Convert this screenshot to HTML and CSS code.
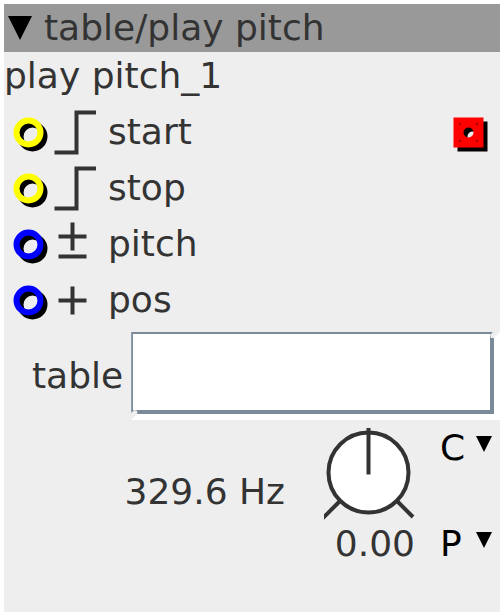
FILE: index.html
```html
<!DOCTYPE html>
<html lang="en">
<head>
    <meta charset="UTF-8">
    <meta name="viewport" content="width=device-width, initial-scale=1.0">
    <title>table/play pitch</title>
    <link rel="stylesheet" href="styles.css">
</head>
<body>
    <main class="patch-object">
        <header class="title-bar">
            <button type="button" class="menu-button" aria-label="Object menu"><span class="arrow arrow-large"></span></button>
            <h1 class="title">table/play pitch</h1>
        </header>
        <div class="instance-name">play pitch_1</div>

        <div class="port-row">
            <svg class="port inlet-yellow" viewBox="0 0 36 36">
                <circle class="port-shadow" cx="20.5" cy="20.5" r="12"/>
                <circle class="port-ring" cx="16.5" cy="16.5" r="12"/>
            </svg>
            <svg class="signal" viewBox="0 0 48 48">
                <path d="M6.5 44.5H28.5V4.5H48"/>
            </svg>
            <span class="port-label">start</span>
            <svg class="port outlet" viewBox="0 0 36 36">
                <g class="outlet-shadow">
                    <rect x="8.5" y="8.5" width="24" height="24" stroke-width="6"/>
                    <circle cx="20.5" cy="20.5" r="8.3" stroke-width="6.6"/>
                </g>
                <g class="outlet-face">
                    <rect x="4.5" y="4.5" width="24" height="24" stroke-width="6"/>
                    <circle cx="16.5" cy="16.5" r="8.3" stroke-width="6.6"/>
                </g>
            </svg>
        </div>
        <div class="port-row">
            <svg class="port inlet-yellow" viewBox="0 0 36 36">
                <circle class="port-shadow" cx="20.5" cy="20.5" r="12"/>
                <circle class="port-ring" cx="16.5" cy="16.5" r="12"/>
            </svg>
            <svg class="signal" viewBox="0 0 48 48">
                <path d="M6.5 44.5H28.5V4.5H48"/>
            </svg>
            <span class="port-label">stop</span>
        </div>
        <div class="port-row">
            <svg class="port inlet-blue" viewBox="0 0 36 36">
                <circle class="port-shadow" cx="20.5" cy="20.5" r="12"/>
                <circle class="port-ring" cx="16.5" cy="16.5" r="12"/>
            </svg>
            <svg class="signal" viewBox="0 0 48 48">
                <path d="M24.5 2.5V30.5M10.5 16.5H38.5M10.5 36.5H38.5"/>
            </svg>
            <span class="port-label">pitch</span>
        </div>
        <div class="port-row">
            <svg class="port inlet-blue" viewBox="0 0 36 36">
                <circle class="port-shadow" cx="20.5" cy="20.5" r="12"/>
                <circle class="port-ring" cx="16.5" cy="16.5" r="12"/>
            </svg>
            <svg class="signal" viewBox="0 0 48 48">
                <path d="M24.5 10.5V38.5M10.5 24.5H38.5"/>
            </svg>
            <span class="port-label">pos</span>
        </div>

        <div class="table-row">
            <label for="tableName">table</label>
            <div class="field">
                <input type="text" id="tableName" name="tableName">
            </div>
        </div>

        <div class="pitch-row">
            <output class="frequency" for="pitch">329.6 Hz</output>
            <div class="dial">
                <div class="knob">
                    <svg viewBox="0 0 92 92">
                        <path d="M16.5 72.5L-2 91M72.5 72.5L89 89"/>
                        <circle cx="44.5" cy="44.5" r="40"/>
                        <path d="M44.5 0V46.5"/>
                    </svg>
                    <input type="range" id="pitch" name="pitch" min="-64" max="64" step="0.01" value="0" aria-label="Pitch">
                </div>
                <output class="dial-value" for="pitch">0.00</output>
            </div>
            <div class="assignments">
                <div class="picker">
                    <select name="controller" aria-label="MIDI controller"><option>C</option></select>
                    <span class="arrow"></span>
                </div>
                <div class="picker">
                    <select name="preset" aria-label="Preset"><option>P</option></select>
                    <span class="arrow"></span>
                </div>
            </div>
        </div>
    </main>
</body>
</html>
```

FILE: styles.css
```css
* {
    box-sizing: border-box;
}
body {
    margin: 0;
    padding: 4px;
    background-color: #fff;
    color: #333;
    font-family: "DejaVu Sans", sans-serif;
    font-size: 36px;
    line-height: 48px;
}
svg {
    display: block;
    fill: none;
}
.patch-object {
    min-height: calc(100vh - 8px);
    background-color: #eee;
}

/* Title */
.title-bar {
    display: flex;
    align-items: center;
    gap: 12px;
    padding-left: 4px;
    background-color: #999;
}
.title {
    margin: 0;
    font-size: 36px;
    font-weight: normal;
}
.menu-button {
    padding: 0;
    border: none;
    background: none;
    cursor: pointer;
}
.arrow {
    display: block;
    width: 16px;
    height: 16px;
    background-color: #000;
    clip-path: polygon(0 0, 100% 0, 50% 100%);
    pointer-events: none;
}
.arrow-large {
    width: 24px;
    height: 24px;
}
.instance-name {
    padding-bottom: 4px;
}

/* Inlets and outlets */
.port-row {
    display: flex;
    align-items: center;
    height: 56px;
    padding: 0 12px 0 8px;
}
.port {
    width: 36px;
    height: 36px;
    margin-top: 4px;
}
.port-shadow,
.port-ring {
    stroke-width: 6;
}
.port-shadow,
.outlet-shadow {
    stroke: #000;
}
.inlet-yellow .port-ring {
    stroke: #ff0;
}
.inlet-blue .port-ring {
    stroke: #00f;
}
.outlet {
    margin-left: auto;
}
.outlet-face {
    stroke: #f00;
}
.signal {
    width: 48px;
    height: 48px;
    stroke: #333;
    stroke-width: 4;
}
.port-label {
    margin-left: 12px;
}

/* Table name field */
.table-row {
    display: flex;
    align-items: center;
    gap: 8px;
    padding: 4px 0 0 28px;
}
/* white bevel, notched at the top right and bottom left corners */
.field {
    flex: 1;
    padding: 0 6px 6px 0;
    background-color: #fff;
    clip-path: polygon(0 0, calc(100% - 7px) 0, calc(100% - 10px) 3px, calc(100% - 9px) 6px, calc(100% - 6px) 6px, 100% 0, 100% 100%, 0 100%, 6px calc(100% - 6px), 6px calc(100% - 9px), 3px calc(100% - 10px), 0 calc(100% - 7px));
}
.field input {
    display: block;
    width: 100%;
    height: 82px;
    padding: 0 8px;
    border: solid #7a8a99;
    border-width: 2px 4px 4px 2px;
    border-radius: 0;
    background-color: #fff;
    color: #333;
    font: inherit;
    outline: none;
}

/* Pitch dial */
.pitch-row {
    display: flex;
    justify-content: flex-end;
    padding: 4px 8px 0 0;
}
.frequency {
    padding-top: 44px;
    margin-right: 39px;
}
.dial {
    padding-top: 4px;
}
.knob {
    display: grid;
    width: 92px;
}
.knob svg,
.knob input {
    grid-area: 1 / 1;
    width: 92px;
    height: 92px;
}
.knob svg {
    stroke: #333;
    stroke-width: 4;
}
.knob circle {
    fill: #fff;
}
.knob input {
    margin: 0;
    opacity: 0;
    cursor: pointer;
}
.dial-value {
    display: block;
    padding-right: 1px;
    text-align: right;
}
.assignments {
    display: flex;
    flex-direction: column;
    justify-content: space-between;
    width: 52px;
    margin-left: 24px;
}
.picker {
    display: grid;
    align-items: start;
}
.picker select,
.picker .arrow {
    grid-area: 1 / 1;
}
.picker select {
    appearance: none;
    width: 100%;
    height: 48px;
    padding: 0;
    border: none;
    background: none;
    color: #000;
    font: inherit;
    cursor: pointer;
}
.picker .arrow {
    justify-self: end;
    margin-top: 12px;
}
```
